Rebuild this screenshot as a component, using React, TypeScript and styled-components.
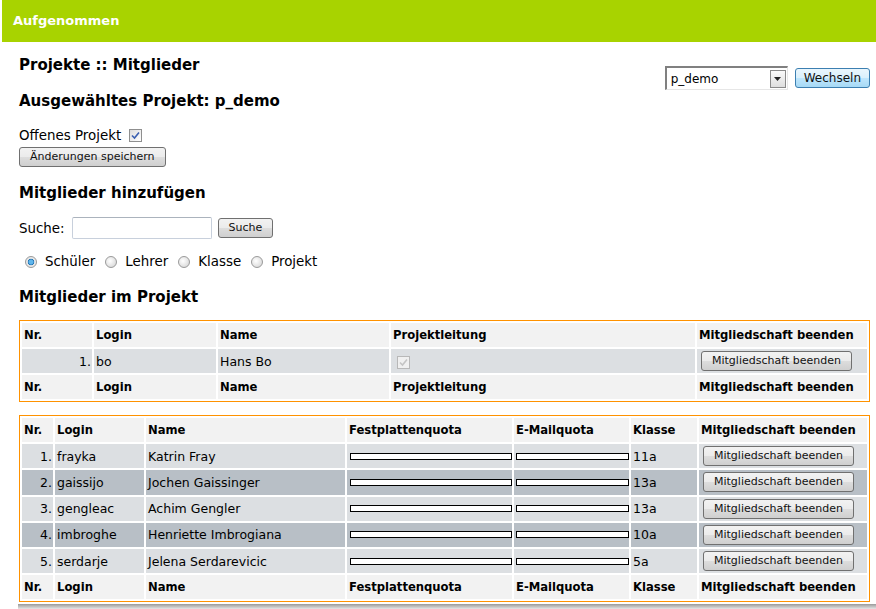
import styled, { createGlobalStyle } from "styled-components";

const GlobalStyle = createGlobalStyle`
  html, body {
    margin: 0;
    padding: 0;
    background: #ffffff;
  }
  body {
    font-family: "DejaVu Sans", Verdana, sans-serif;
    font-size: 13.4px;
    color: #000;
  }
`;

type Member = {
  login: string;
  name: string;
  klasse: string;
};

const members: Member[] = [
  { login: "frayka", name: "Katrin Fray", klasse: "11a" },
  { login: "gaissijo", name: "Jochen Gaissinger", klasse: "13a" },
  { login: "gengleac", name: "Achim Gengler", klasse: "13a" },
  { login: "imbroghe", name: "Henriette Imbrogiana", klasse: "10a" },
  { login: "serdarje", name: "Jelena Serdarevicic", klasse: "5a" },
];

function Check({ disabled }: { disabled?: boolean }) {
  return (
    <CheckBox $disabled={disabled}>
      <svg width="9" height="9" viewBox="0 0 9 9">
        <path
          d="M1 4.5 L3.5 7 L8 1.5"
          fill="none"
          stroke={disabled ? "#c4c4c4" : "#3a5fb0"}
          strokeWidth="1.6"
        />
      </svg>
    </CheckBox>
  );
}

export default function App() {
  return (
    <>
      <GlobalStyle />
      <Page>
        <TopBar>Aufgenommen</TopBar>
        <Content>
          <TitleRow>
            <div>
              <PageTitle>Projekte :: Mitglieder</PageTitle>
              <Heading>Ausgewähltes Projekt: p_demo</Heading>
            </div>
            <SwitchForm>
              <Select>
                <span>p_demo</span>
                <SelectArrow>
                  <svg width="7" height="4" viewBox="0 0 7 4">
                    <path d="M0 0 H7 L3.5 4 Z" fill="#222" />
                  </svg>
                </SelectArrow>
              </Select>
              <Button $blue>Wechseln</Button>
            </SwitchForm>
          </TitleRow>

          <CheckLine>
            Offenes Projekt <Check />
          </CheckLine>
          <SaveRow>
            <Button>Änderungen speichern</Button>
          </SaveRow>

          <Heading $top={17}>Mitglieder hinzufügen</Heading>
          <SearchRow>
            Suche:
            <SearchInput />
            <Button>Suche</Button>
          </SearchRow>
          <RadioRow>
            <RadioLabel>
              <Radio $checked />
              Schüler
            </RadioLabel>
            <RadioLabel>
              <Radio />
              Lehrer
            </RadioLabel>
            <RadioLabel>
              <Radio />
              Klasse
            </RadioLabel>
            <RadioLabel>
              <Radio />
              Projekt
            </RadioLabel>
          </RadioRow>

          <Heading $top={19}>Mitglieder im Projekt</Heading>

          <Table $top={14}>
            <colgroup>
              <Col $w={70} />
              <Col $w={122} />
              <Col $w={171} />
              <Col $w={304} />
              <Col $w={170} />
            </colgroup>
            <thead>
              <tr>
                <Th>Nr.</Th>
                <Th>Login</Th>
                <Th>Name</Th>
                <Th>Projektleitung</Th>
                <Th>Mitgliedschaft beenden</Th>
              </tr>
            </thead>
            <tbody>
              <tr>
                <NrCell>1.</NrCell>
                <Td>bo</Td>
                <Td>Hans Bo</Td>
                <Td>
                  <Check disabled />
                </Td>
                <Td>
                  <Button $row>Mitgliedschaft beenden</Button>
                </Td>
              </tr>
            </tbody>
            <tfoot>
              <tr>
                <Th>Nr.</Th>
                <Th>Login</Th>
                <Th>Name</Th>
                <Th>Projektleitung</Th>
                <Th>Mitgliedschaft beenden</Th>
              </tr>
            </tfoot>
          </Table>

          <Table $top={13} $rowH={24.2}>
            <colgroup>
              <Col $w={31} />
              <Col $w={89} />
              <Col $w={199} />
              <Col $w={165} />
              <Col $w={115} />
              <Col $w={66} />
              <Col $w={168} />
            </colgroup>
            <thead>
              <tr>
                <Th>Nr.</Th>
                <Th>Login</Th>
                <Th>Name</Th>
                <Th>Festplattenquota</Th>
                <Th>E-Mailquota</Th>
                <Th>Klasse</Th>
                <Th>Mitgliedschaft beenden</Th>
              </tr>
            </thead>
            <tbody>
              {members.map((m, i) => (
                <tr key={m.login}>
                  <NrCell $dark={i % 2 === 1}>{i + 1}.</NrCell>
                  <Td $dark={i % 2 === 1}>{m.login}</Td>
                  <Td $dark={i % 2 === 1}>{m.name}</Td>
                  <Td $dark={i % 2 === 1}>
                    <Quota $w={162} $left={1} />
                  </Td>
                  <Td $dark={i % 2 === 1}>
                    <Quota $w={113} $left={0} />
                  </Td>
                  <Td $dark={i % 2 === 1}>{m.klasse}</Td>
                  <Td $dark={i % 2 === 1}>
                    <Button $row>Mitgliedschaft beenden</Button>
                  </Td>
                </tr>
              ))}
            </tbody>
            <tfoot>
              <tr>
                <Th>Nr.</Th>
                <Th>Login</Th>
                <Th>Name</Th>
                <Th>Festplattenquota</Th>
                <Th>E-Mailquota</Th>
                <Th>Klasse</Th>
                <Th>Mitgliedschaft beenden</Th>
              </tr>
            </tfoot>
          </Table>
          <BottomShade />
        </Content>
      </Page>
    </>
  );
}

const Page = styled.div`
  width: 876px;
  height: 609px;
  overflow: hidden;
  padding-left: 2px;
  box-sizing: border-box;
`;

const TopBar = styled.div`
  height: 42px;
  background: #a8d300;
  color: #fff;
  font-weight: bold;
  font-size: 13px;
  line-height: 42px;
  padding-left: 11px;
`;

const Content = styled.div`
  padding: 0 5px 0 17px;
`;

const TitleRow = styled.div`
  display: flex;
  justify-content: space-between;
  align-items: flex-start;
`;

const PageTitle = styled.h1`
  font-size: 15px;
  font-weight: bold;
  margin: 14px 0 0;
  line-height: 18px;
`;

const Heading = styled.h2<{ $top?: number }>`
  font-size: 15px;
  font-weight: bold;
  margin: ${(p) => p.$top ?? 18}px 0 0;
  line-height: 18px;
`;

const SwitchForm = styled.div`
  display: flex;
  align-items: center;
  gap: 7px;
  margin-top: 24px;
  margin-right: 1px;
`;

const Select = styled.div`
  width: 123px;
  height: 24px;
  box-sizing: border-box;
  border-top: 2px solid #808080;
  border-left: 2px solid #808080;
  border-right: 1px solid #e6e6e6;
  border-bottom: 1px solid #e6e6e6;
  display: flex;
  align-items: center;
  justify-content: space-between;
  padding-left: 4px;
  font-size: 12px;
`;

const SelectArrow = styled.span`
  width: 16px;
  height: 18px;
  margin-right: 1px;
  box-sizing: border-box;
  border: 1px solid #8a8a8a;
  background: linear-gradient(#fafafa, #dedede);
  display: flex;
  align-items: center;
  justify-content: center;
`;

const Button = styled.button<{ $blue?: boolean; $row?: boolean }>`
  font-family: "DejaVu Sans", Verdana, sans-serif;
  font-size: ${(p) => (p.$blue ? 12 : 11)}px;
  color: #111;
  height: 20px;
  padding: 0 ${(p) => (p.$blue ? 8 : 10)}px;
  border: 1px solid ${(p) => (p.$blue ? "#3c7fb1" : "#707070")};
  border-radius: 3px;
  background: ${(p) =>
    p.$blue
      ? "linear-gradient(#eaf6fd 0%, #d9f0fc 50%, #bee6fd 51%, #a7d9f5 100%)"
      : "linear-gradient(#f2f2f2 0%, #ebebeb 50%, #dddddd 51%, #cfcfcf 100%)"};
  line-height: 18px;
  margin: ${(p) => (p.$row ? "0 0 0 2px" : 0)};
  display: inline-block;
  vertical-align: middle;
  box-sizing: border-box;
`;

const CheckLine = styled.div`
  margin-top: 17px;
  display: flex;
  align-items: center;
  gap: 8px;
  height: 17px;
`;

const SaveRow = styled.div`
  margin-top: 3px;
  height: 20px;
`;

const CheckBox = styled.span<{ $disabled?: boolean }>`
  width: 13px;
  height: 13px;
  box-sizing: border-box;
  border: 1px solid ${(p) => (p.$disabled ? "#b8b8b8" : "#8f8f8f")};
  background: ${(p) => (p.$disabled ? "#f0f0f0" : "linear-gradient(135deg, #dcdcdc, #fff)")};
  display: inline-flex;
  align-items: center;
  justify-content: center;
  vertical-align: middle;
  margin-left: ${(p) => (p.$disabled ? 4 : 0)}px;
`;

const SearchRow = styled.div`
  margin-top: 15px;
  display: flex;
  align-items: center;
  gap: 6px;
`;

const SearchInput = styled.input`
  width: 140px;
  height: 22px;
  box-sizing: border-box;
  border: 1px solid #c8d0dc;
  border-top-color: #abb3bd;
  border-radius: 2px;
  margin-left: 1px;
`;

const RadioRow = styled.div`
  margin-top: 15px;
  display: flex;
  align-items: center;
  gap: 10px;
  padding-left: 6px;
`;

const RadioLabel = styled.label`
  display: flex;
  align-items: center;
  gap: 8px;
`;

const Radio = styled.span<{ $checked?: boolean }>`
  width: 12px;
  height: 12px;
  border-radius: 50%;
  box-sizing: border-box;
  border: 1px solid #9a9a9a;
  background: ${(p) =>
    p.$checked
      ? "radial-gradient(circle, #5fb6ec 0 2px, #1d6fb0 3px, #e8e8e8 3.6px)"
      : "radial-gradient(circle at 40% 40%, #ffffff, #d0d0d0)"};
`;

const Table = styled.table<{ $top?: number; $rowH?: number }>`
  width: 851px;
  margin-top: ${(p) => p.$top ?? 15}px;
  border: 1px solid #ff9200;
  border-spacing: 2px;
  table-layout: fixed;
  font-size: 12.5px;

  th,
  td {
    height: ${(p) => p.$rowH ?? 24}px;
  }
`;

const Col = styled.col<{ $w: number }>`
  width: ${(p) => p.$w}px;
`;

const Th = styled.th`
  background: #f2f2f2;
  text-align: left;
  font-weight: bold;
  font-size: 11.6px;
  padding: 0 2px;
  white-space: nowrap;
  overflow: hidden;
`;

const Td = styled.td<{ $dark?: boolean }>`
  background: ${(p) => (p.$dark ? "#b8bfc6" : "#dcdfe2")};
  padding: 0 2px;
  white-space: nowrap;
  overflow: hidden;
`;

const NrCell = styled(Td)`
  text-align: right;
  padding: 0 1px 0 3px;
`;

const Quota = styled.div<{ $w: number; $left: number }>`
  width: ${(p) => p.$w}px;
  margin-left: ${(p) => p.$left}px;
  height: 7px;
  box-sizing: border-box;
  border: 1px solid #000;
  background: #fff;
`;

const BottomShade = styled.div`
  height: 5px;
  margin: 2px -5px 0 -1px;
  background: linear-gradient(#9a9a9a, #e6e6e6);
`;
